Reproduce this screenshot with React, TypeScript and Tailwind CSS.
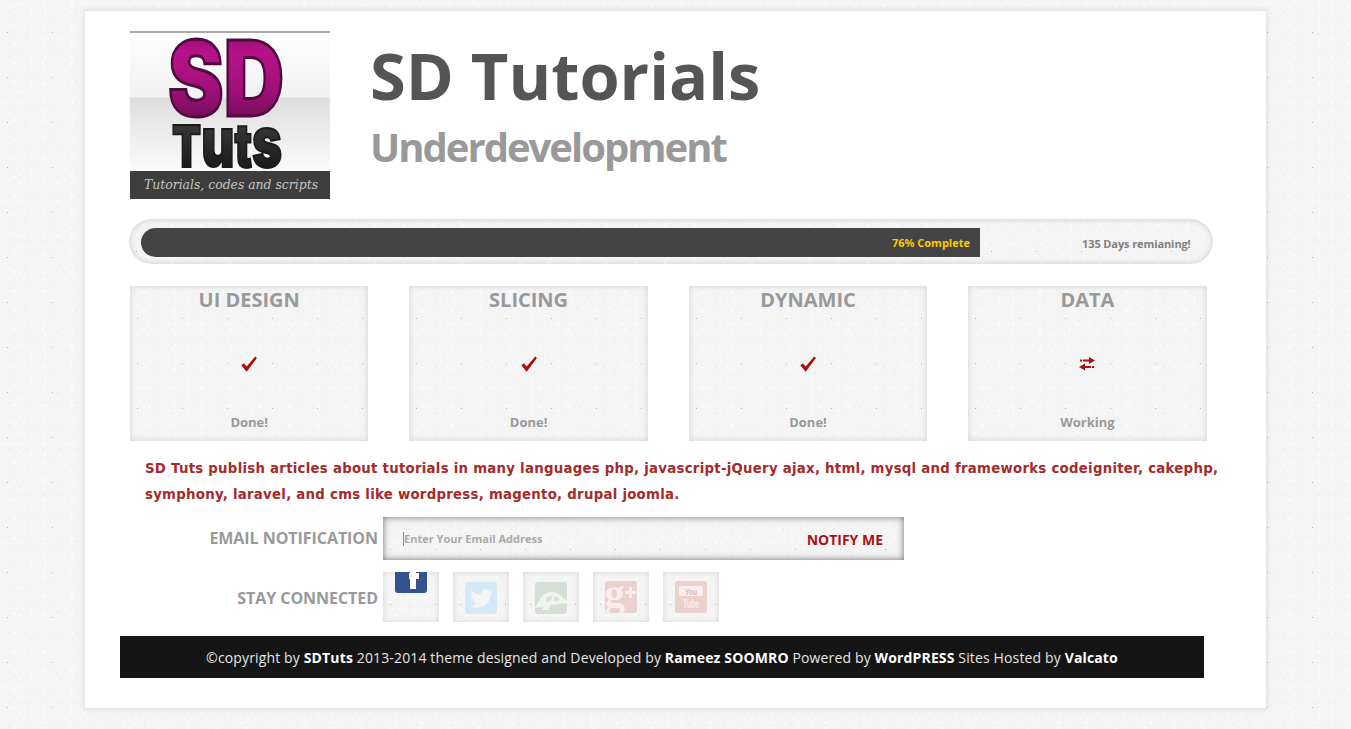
import { FaTwitter } from "react-icons/fa";

const texture =
  "bg-[#f4f4f4] bg-[radial-gradient(circle_at_7.5px_32.5px,#b4b4b4_0.5px,transparent_1px),radial-gradient(circle_at_3px_4px,#f8f8f8_1px,transparent_1.6px),radial-gradient(circle_at_6px_3px,#f8f8f8_1.2px,transparent_1.8px),radial-gradient(circle_at_9px_12px,#efefef_0.8px,transparent_1.4px),radial-gradient(circle_at_14px_6px,#f9f9f9_1.5px,transparent_2px),radial-gradient(circle_at_20px_22px,#f0f0f0_0.8px,transparent_1.4px)] bg-[length:45px_45px,7px_11px,13px_9px,17px_23px,29px_19px,37px_31px]";

const boxes = [
  { title: "UI DESIGN", status: "Done!", working: false },
  { title: "SLICING", status: "Done!", working: false },
  { title: "DYNAMIC", status: "Done!", working: false },
  { title: "DATA", status: "Working", working: true },
];

function Logo() {
  return (
    <svg width="200" height="168" viewBox="0 0 200 168" className="block shrink-0">
      <defs>
        <linearGradient id="sky" x1="0" y1="0" x2="0" y2="1">
          <stop offset="0" stopColor="#ffffff" />
          <stop offset="0.39" stopColor="#f1f1f1" />
          <stop offset="0.4" stopColor="#dedede" />
          <stop offset="0.83" stopColor="#fbfbfb" />
        </linearGradient>
        <linearGradient id="pink" x1="0" y1="0" x2="0" y2="1">
          <stop offset="0" stopColor="#6d0d57" />
          <stop offset="0.3" stopColor="#b8128a" />
          <stop offset="0.6" stopColor="#a01077" />
          <stop offset="1" stopColor="#4f0a40" />
        </linearGradient>
        <linearGradient id="black" x1="0" y1="0" x2="0" y2="1">
          <stop offset="0" stopColor="#4a4a4a" />
          <stop offset="1" stopColor="#0e0e0e" />
        </linearGradient>
      </defs>
      <rect width="200" height="168" fill="url(#sky)" />
      <rect width="200" height="2" fill="#a8a8a8" />
      <text
        x="38"
        y="85"
        textLength="116"
        lengthAdjust="spacingAndGlyphs"
        fontFamily="Inter, 'Liberation Sans', sans-serif"
        fontWeight="900"
        fontSize="104"
        fill="url(#pink)"
        stroke="#4f0a40"
        strokeWidth="3"
        strokeLinejoin="miter"
      >
        SD
      </text>
      <text
        x="42"
        y="136"
        textLength="110"
        lengthAdjust="spacingAndGlyphs"
        fontFamily="Inter, 'Liberation Sans', sans-serif"
        fontWeight="900"
        fontSize="58"
        fill="url(#black)"
        stroke="#1a1a1a"
        strokeWidth="2"
        strokeLinejoin="miter"
      >
        T<tspan fontSize="70">u</tspan>
        <tspan fontSize="60">t</tspan>
        <tspan fontSize="70">s</tspan>
      </text>
      <rect y="140" width="200" height="28" fill="#3d3d3d" />
      <text
        x="14"
        y="158"
        textLength="174"
        lengthAdjust="spacingAndGlyphs"
        fontFamily="'DejaVu Serif', serif"
        fontStyle="italic"
        fontSize="13"
        fill="#c4c4c4"
      >
        Tutorials, codes and scripts
      </text>
    </svg>
  );
}

function CheckIcon() {
  return (
    <svg width="16" height="16" viewBox="0 0 16 16" className="block">
      <polygon points="0.4,9.4 5.7,15.8 15.9,2 14.2,0.6 5.7,10.6 2.6,7.2" fill="#a80f0f" />
    </svg>
  );
}

function SwapIcon() {
  return (
    <svg width="16" height="14" viewBox="0 0 16 14" className="block" fill="#a80f0f">
      <rect x="1" y="2.5" width="2" height="2" />
      <rect x="4" y="2.5" width="7" height="2" />
      <polygon points="10,0 16,3.5 10,7" />
      <rect x="13" y="9" width="2" height="2" />
      <rect x="5" y="9" width="7" height="2" />
      <polygon points="6,6.5 0,10 6,13.5" />
    </svg>
  );
}

function DeviantIcon() {
  return (
    <svg width="32" height="32" viewBox="0 0 32 32" className="block">
      <rect width="32" height="32" rx="3" fill="#d6dfd6" />
      <path d="M0 26 L5 17 C9 10 18 8 24 12 L32 19 L32 21 L16 23 L13 28 L7 28 L9 25 Z" fill="#f1f3f1" />
      <path d="M11 16 L17 13 L16 18 L11 20 Z M20 14 L25 18 L19 19 Z" fill="#d6dfd6" />
    </svg>
  );
}

function YoutubeIcon() {
  return (
    <svg width="32" height="32" viewBox="0 0 32 32" className="block">
      <rect width="32" height="32" rx="3" fill="#ebd0cc" />
      <rect x="4" y="5" width="24" height="10" rx="2" fill="#f8eeed" />
      <text
        x="10"
        y="13.5"
        textLength="12"
        lengthAdjust="spacingAndGlyphs"
        fontFamily="'Liberation Sans', sans-serif"
        fontWeight="700"
        fontSize="9"
        fill="#e2b4af"
      >
        You
      </text>
      <text
        x="8"
        y="27"
        textLength="16"
        lengthAdjust="spacingAndGlyphs"
        fontFamily="'Liberation Sans', sans-serif"
        fontWeight="700"
        fontSize="13"
        fill="#f8eeed"
      >
        Tube
      </text>
    </svg>
  );
}

function Social({ children }: { children: React.ReactNode }) {
  return (
    <div className={`relative w-[56px] h-[50px] overflow-hidden shadow-[inset_0_0_6px_rgba(0,0,0,0.12)] ${texture}`}>
      {children}
    </div>
  );
}

export default function App() {
  return (
    <div className={`h-[729px] overflow-hidden pl-[84px] pt-[10px] font-['Open_Sans',sans-serif] ${texture}`}>
      <div className="w-[1183px] h-[699px] bg-white border border-[#e6e6e6] shadow-[0_0_6px_rgba(0,0,0,0.1)] pl-[45px] pt-[20px]">
        <div className="flex items-start">
          <Logo />
          <div className="ml-[40px] flex flex-col">
            <h1 className="text-[65px] leading-[65px] mt-[12px] font-bold text-[#555555]">SD Tutorials</h1>
            <h2 className="text-[40px] leading-[44px] mt-[17px] font-bold tracking-[-2px] text-[#999999]">
              Underdevelopment
            </h2>
          </div>
        </div>

        <div
          className={`mt-[20px] ml-[-1px] w-[1084px] h-[45px] rounded-[23px] pl-[12px] pt-[9px] flex shadow-[inset_0_0_6px_rgba(0,0,0,0.18)] ${texture}`}
        >
          <div className="w-[839px] h-[29px] bg-[#444444] rounded-l-[15px] flex items-center justify-end pr-[10px]">
            <span className="mt-[2px] text-[11px] font-bold text-[#ffc800]">76% Complete</span>
          </div>
          <span className="mt-[2px] h-[29px] flex items-center ml-[102px] text-[11px] tracking-[-0.1px] font-bold text-[#808080]">
            135 Days remianing!
          </span>
        </div>

        <div className="mt-[22px] w-[1076.6px] grid grid-cols-4 gap-[41px]">
          {boxes.map((b) => (
            <div
              key={b.title}
              className={`h-[155px] flex flex-col items-center shadow-[inset_0_0_6px_rgba(0,0,0,0.14)] ${texture}`}
            >
              <h3 className="text-[20px] leading-[27px] font-bold text-[#999999]">{b.title}</h3>
              <div className="mt-[43px] h-[16px] flex items-center">{b.working ? <SwapIcon /> : <CheckIcon />}</div>
              <p className="mt-[41px] text-[13px] leading-[18px] font-bold text-[#999999]">{b.status}</p>
            </div>
          ))}
        </div>

        <p className="mt-[15px] ml-[15px] w-[1090px] font-['DejaVu_Sans',sans-serif] text-[13.3px] tracking-[0.265px] leading-[26px] font-bold text-[#a52a2a]">
          SD Tuts publish articles about tutorials in many languages php, javascript-jQuery ajax, html, mysql and
          frameworks codeigniter, cakephp, symphony, laravel, and cms like wordpress, magento, drupal joomla.
        </p>

        <div className="mt-[9px] flex items-center">
          <span className="mb-[2px] w-[248px] text-right text-[16px] tracking-[-0.05px] font-bold text-[#999999]">
            EMAIL NOTIFICATION
          </span>
          <div
            className={`ml-[5px] w-[521px] h-[43px] flex items-center pl-[20px] pr-[20px] shadow-[inset_0_0_7px_rgba(0,0,0,0.55)] ${texture}`}
          >
            <span className="w-px h-[14px] bg-[#888888]" />
            <span className="mt-[2px] text-[11px] font-bold text-[#aaaaaa]">Enter Your Email Address</span>
            <span className="mt-[2px] ml-auto mr-px text-[14px] font-bold text-[#a81414]">NOTIFY ME</span>
          </div>
        </div>

        <div className="mt-[12px] flex items-center">
          <span className="mt-[2px] w-[248px] text-right text-[16px] tracking-[-0.05px] font-bold text-[#999999]">
            STAY CONNECTED
          </span>
          <div className="ml-[5px] flex gap-[14px]">
            <Social>
              <div className="absolute left-[12px] top-[-11px] w-[32px] h-[32px] rounded-[3px] bg-[#34528f]">
                <div className="absolute left-[15px] top-0 w-[6px] h-[28px] bg-white" />
                <div className="absolute left-[14px] top-[12px] w-[10px] h-[6px] bg-white" />
              </div>
            </Social>
            <Social>
              <div className="absolute left-[12px] top-[10px] w-[32px] h-[32px] rounded-[3px] bg-[#d3e9f5] flex items-center justify-center">
                <FaTwitter className="text-[#f3f5f6] text-[23px]" />
              </div>
            </Social>
            <Social>
              <div className="absolute left-[12px] top-[10px]">
                <DeviantIcon />
              </div>
            </Social>
            <Social>
              <div className="absolute left-[12px] top-[9px] w-[32px] h-[32px] rounded-[3px] bg-[#ebd0cc] overflow-hidden text-[#f8eeed]">
                <span className="absolute left-[-1px] top-[-12px] font-['Liberation_Serif',serif] font-bold text-[42px] leading-[48px]">
                  g
                </span>
                <div className="absolute left-[20px] top-[10px] w-[11px] h-[3px] bg-[#f8eeed]" />
                <div className="absolute left-[24px] top-[6px] w-[3px] h-[11px] bg-[#f8eeed]" />
              </div>
            </Social>
            <Social>
              <div className="absolute left-[12px] top-[9px]">
                <YoutubeIcon />
              </div>
            </Social>
          </div>
        </div>

        <div className="mt-[14px] ml-[-10px] w-[1084px] h-[42px] bg-[#151515] flex items-center justify-center text-[14px] tracking-[0.14px] text-[#e6e6e6]">
          <p>
            ©copyright by <b className="text-white">SDTuts</b> 2013-2014 theme designed and Developed by{" "}
            <b className="text-white">Rameez SOOMRO</b> Powered by <b className="text-white">WordPRESS</b> Sites Hosted
            by <b className="text-white">Valcato</b>
          </p>
        </div>
      </div>
    </div>
  );
}
